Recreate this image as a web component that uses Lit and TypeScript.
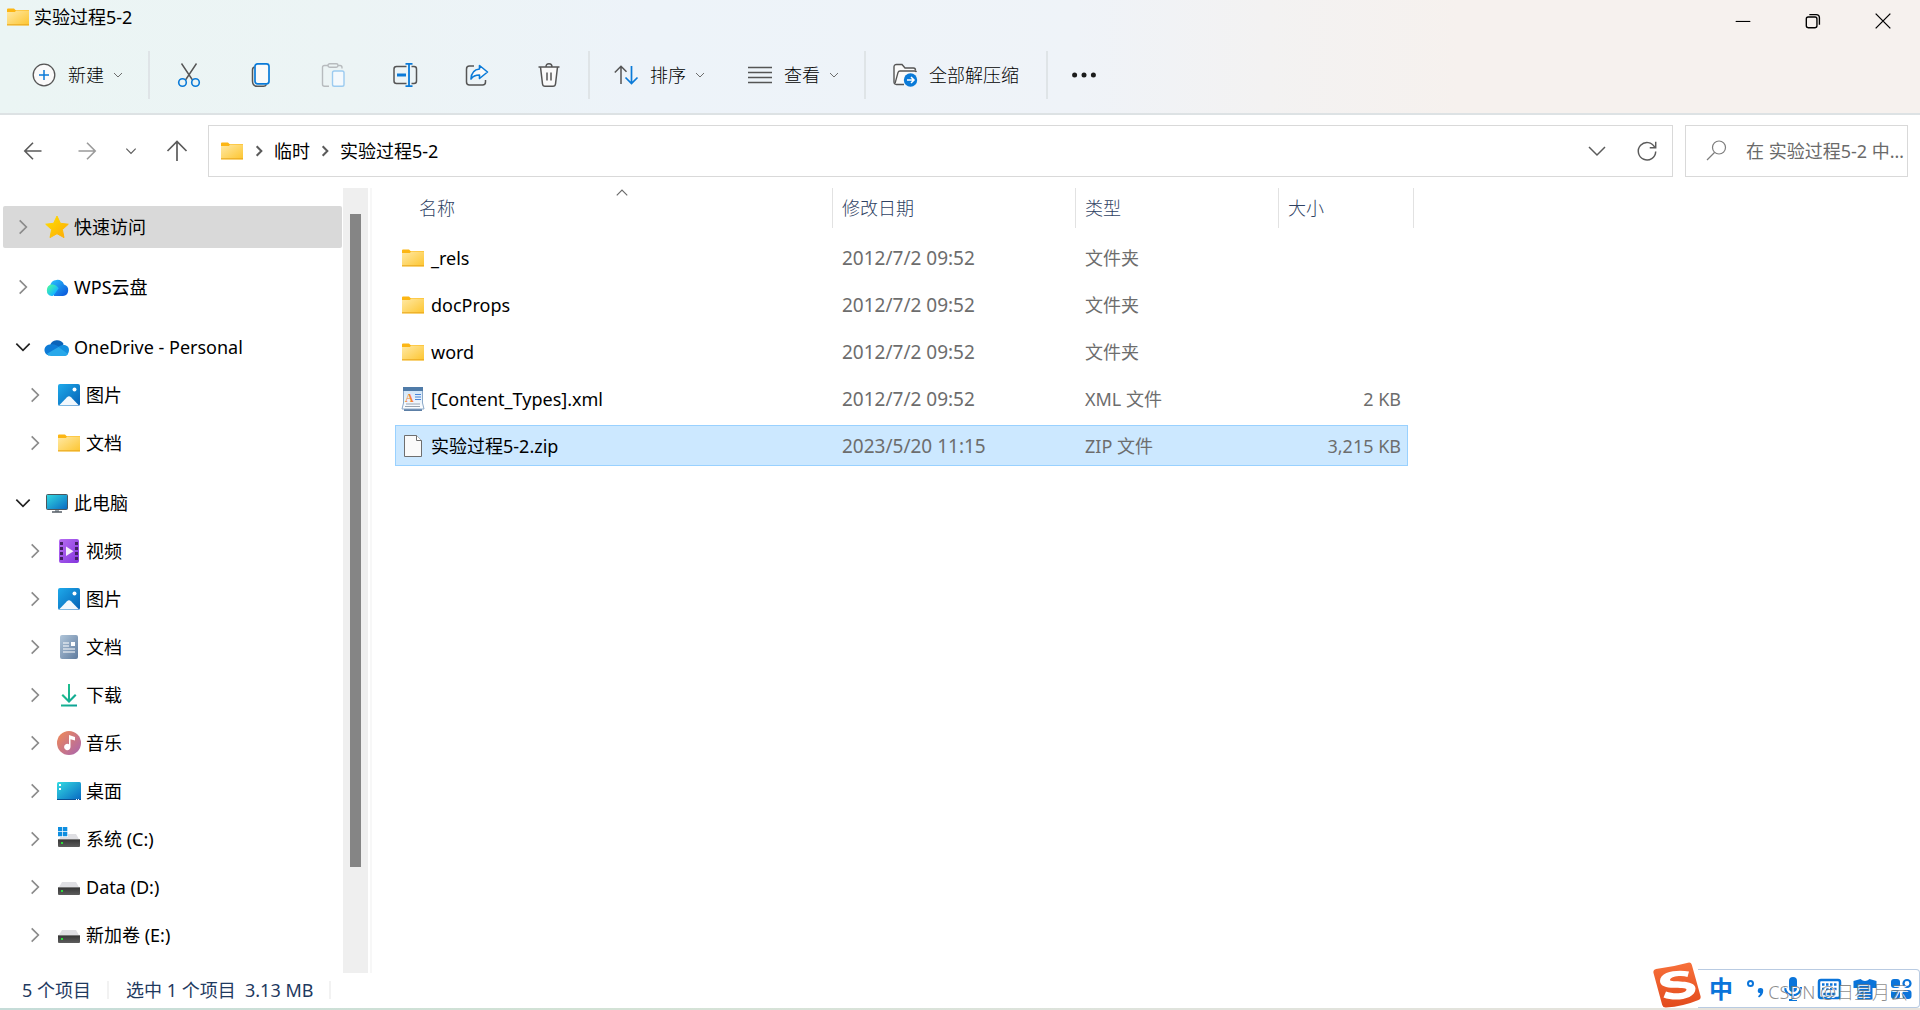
import { LitElement, html, css, svg, nothing } from "lit";
import { customElement, property } from "lit/decorators.js";
import { classMap } from "lit/directives/class-map.js";

const icon = (name: string, size = 24) => html`<svg class="icon" aria-hidden="true" width=${size} height=${size} viewBox="0 0 24 24">${glyphs[name]}</svg>`;

const drive = svg`
  <path d="M5 7h14l3.5 6h-21z" fill="#dfdfe3"/>
  <rect x="1" y="12" width="22" height="8" rx="1" fill="url(#dr)"/>
  <rect x="1" y="12" width="22" height="1" fill="#777"/>
  <rect x="4" y="15" width="2" height="2" fill="#2bdc3a"/>
  <defs><linearGradient id="dr" x2="0" y2="1"><stop stop-color="#333"/><stop offset="1" stop-color="#5d5d5d"/></linearGradient></defs>`;

const glyphs: Record<string, unknown> = {
  folder: svg`<defs><linearGradient id="f" x2="1" y2="1"><stop stop-color="#ffe9a6"/><stop offset="1" stop-color="#fdc52e"/></linearGradient></defs>
    <path d="M1 4.5q0-1 1-1h6l1.500 1.500H23v5H1z" fill="#fcb614"/><path d="M1 7h8l1-1.500h13V20q0 .5-.5.5h-21Q1 20.500 1 20z" fill="url(#f)"/><path d="M1 19.800h22" stroke="#e9a71f"/>`,
  star: svg`<defs><linearGradient id="s" x2="1" y2="1"><stop stop-color="#ffe000"/><stop offset="1" stop-color="#fda909"/></linearGradient></defs>
    <path d="M12 1l3.400 7.300 7.900.9-5.900 5.400 1.600 8L12 18.700 5 22.600l1.600-8L.7 9.200l7.900-.9z" fill="url(#s)" stroke="url(#s)" stroke-linejoin="round"/>`,
  wps: svg`<defs><linearGradient id="w1" x2="1" y2="1"><stop offset=".2" stop-color="#40efb0"/><stop offset=".7" stop-color="#16b8ff"/></linearGradient><linearGradient id="w2" x2="1" y2="1"><stop stop-color="#29c5ff"/><stop offset="1" stop-color="#0a50d8"/></linearGradient></defs>
    <path d="M5 11a7.300 7.300 0 0 1 14-1.500A5.900 5.900 0 0 1 18 21H9z" fill="url(#w2)"/><path d="M7 9.500c3 0 5 1.500 6.700 3.800L10 18.500C8.500 20.400 8 21 6.800 21A5.800 5.800 0 0 1 7 9.500z" fill="url(#w1)"/>`,
  onedrive: svg`<path d="M5 10.500A7.500 7.500 0 0 1 18.600 9l-4 6z" fill="#0b64b9"/><path d="M6 9.500c3-.7 6 1 8.500 2.700L4 20.500A5.500 5.500 0 0 1 6 9.500z" fill="#0e7bd6"/><path d="M13 12.500C15 9 24 8.500 24 15c0 3-2 6-5 6l-5-6z" fill="#1490df"/><path d="M2 18.800 13.500 12l9.500 7c-.8 1.200-2 2-4 2H6c-2 0-3.300-.8-4-2.200z" fill="#28a8ea"/>`,
  picture: svg`<defs><linearGradient id="p" x2="1" y2="1"><stop stop-color="#1eaaeb"/><stop offset="1" stop-color="#0560b4"/></linearGradient></defs>
    <rect x="1" y="1" width="22" height="22" rx="2" fill="url(#p)"/><path d="M2 22.500 10 14.200q2-2 4 0l8 8.300z" fill="#f2f8fd"/><circle cx="17.500" cy="6.500" r="2" fill="#fff"/>`,
  monitor: svg`<defs><linearGradient id="m" x2="1" y2="1"><stop stop-color="#33dbe2"/><stop offset="1" stop-color="#0867c2"/></linearGradient></defs>
    <path d="M10 18h4v3h-4z" fill="#9aa3aa"/><path d="M7 21h10" stroke="#555d65" stroke-width="1.500"/><rect x="1.500" y="3.500" width="21" height="15" rx="1" fill="url(#m)" stroke="#4b565e"/>`,
  video: svg`<defs><linearGradient id="v" x2="1" y2="1"><stop stop-color="#b66cf2"/><stop offset="1" stop-color="#8436dd"/></linearGradient></defs>
    <rect x="2" y="0" width="20" height="24" rx="2" fill="url(#v)"/><path d="M4.500 3v19M19.500 3v19" stroke="#432065" stroke-width="3" stroke-dasharray="3 2"/><path d="M9 7.500v9.500l7.500-4.700z" fill="#f5eefb"/>`,
  document: svg`<defs><linearGradient id="d" x2="1" y2="1"><stop stop-color="#b0c5d9"/><stop offset="1" stop-color="#5f7b9e"/></linearGradient></defs>
    <rect x="3" y="0" width="18" height="24" rx="2" fill="url(#d)"/><path d="M6 8h6M6 11h6M6 14h12M6 17h12" stroke="#fff" stroke-width="1.200"/><rect x="14" y="7" width="4" height="4" fill="#fff"/>`,
  download: svg`<defs><linearGradient id="dl" x2="1" y2="1"><stop stop-color="#26c98a"/><stop offset="1" stop-color="#0a9f97"/></linearGradient></defs>
    <path d="M11 1h2v15l5-5 1.500 1.500L12 20l-7.500-7.500L6 11l5 5zM4 21.500h16v2H4z" fill="url(#dl)"/>`,
  music: svg`<defs><linearGradient id="mu" x2="1" y2="1"><stop stop-color="#f28b54"/><stop offset="1" stop-color="#a864b0"/></linearGradient></defs>
    <circle cx="12" cy="12" r="12" fill="url(#mu)"/><path d="M12 4l6 2v3.500l-4.500-1.300V16a3.200 3.200 0 1 1-1.500-2.700z" fill="#fff"/>`,
  desktop: svg`<rect x="0" y="3" width="24" height="18" rx="1.500" fill="url(#m2)"/><defs><linearGradient id="m2" x2="1" y2="1"><stop stop-color="#33dbe2"/><stop offset="1" stop-color="#0867c2"/></linearGradient></defs><path d="M0 20.500h24" stroke="#0b4f93"/><path d="M2 5h2v2H2zM2 9h2v2H2z" fill="#fff"/><path d="M19 20.500h1M21 20.500h1" stroke="#fff"/>`,
  drive,
  system: svg`${drive}<path d="M1 0h10v10H1z" fill="#fff"/><path d="M1 0h4.300v4.300H1zM6 0h4.300v4.300H6zM1 5h4.300v4.300H1zM6 5h4.300v4.300H6z" fill="#0e8ee0"/>`,
  xml: svg`<defs><linearGradient id="x" x2="0" y2="1"><stop stop-color="#cbe2f8"/><stop offset="1" stop-color="#fff"/></linearGradient></defs>
    <path d="M3 21h18v3H3z" fill="#5c7fa6"/><path d="M2.500 1h19v15l1.500 6H1l1.500-6z" fill="url(#x)" stroke="#8ba8c8"/><path d="M2 0h20v4H2z" fill="#4f7ba8"/><text x="4" y="14.500" font-family="Liberation Serif, serif" font-size="12" font-weight="700" fill="#f58634">A</text><path d="M14 7.500h6M14 10h6M14 12.500h6" stroke="#4a86d8"/><path d="M5 17h14M4 19.500h15" stroke="#9aa5b2"/>`,
  file: svg`<path d="M3.500 1.500h12l5 5v16h-17z" fill="#fafafa" stroke="#6e6e6e"/><path d="M15.500 1.500v5h5" fill="#fff" stroke="#6e6e6e"/>`,
  add: svg`<circle cx="12" cy="12" r="10.800" fill="#fafafa" stroke="#555" stroke-width="1.300"/><path d="M12 7v10M7 12h10" stroke="#0a7ad8" stroke-width="1.500"/>`,
  cut: svg`<g fill="none" stroke-width="1.400"><path d="M4.500.5 15.500 17M19.500.5 8.500 17" stroke="#555"/><circle cx="5.500" cy="19.500" r="3.800" stroke="#0a7ad8" stroke-width="1.600"/><circle cx="18.500" cy="19.500" r="3.800" stroke="#0a7ad8" stroke-width="1.600"/></g>`,
  copy: svg`<g fill="none" stroke-width="1.500"><path d="M5.500 4Q3.500 4.500 3.500 7v11q0 5.300 5 5.300h6q2 0 3-1.800" stroke="#555"/><rect x="6" y=".8" width="14" height="20" rx="2.500" fill="#fafafa" stroke="#0a7ad8" stroke-width="1.700"/></g>`,
  paste: svg`<g fill="none" stroke-width="1.400"><path d="M7 2.500H3.500q-2 0-2 2v16.700q0 2 2 2H8M17 2.500h2q2 0 2 2v1" stroke="#b7bbbe"/><rect x="7" y=".8" width="10" height="3.500" rx="1.700" stroke="#b7bbbe"/><rect x="11.500" y="8" width="11.500" height="15.300" rx="1.800" fill="#f4f9fd" stroke="#9ccbf0"/></g>`,
  rename: svg`<g fill="none" stroke-width="1.500"><path d="M13.500 3.500H3.500Q1 3.500 1 6v12q0 2.500 2.500 2.500h10M18.500 3.500h2.500q2.500 0 2.500 2.500v12q0 2.500-2.500 2.500h-2.500" stroke="#555"/><path d="M12.500.8h7M12.500 23.200h7M16 .8v22.400" stroke="#0a7ad8" stroke-width="1.800"/><path d="M4 12h9" stroke="#0a7ad8" stroke-width="3"/></g>`,
  share: svg`<g fill="none" stroke-width="1.500" stroke-linejoin="round"><path d="M9 3H4.500Q1.500 3 1.500 6v13q0 3 3 3h13q3 0 3-3v-2" stroke="#555"/><path d="M14.500 2.500 22.500 9l-8 6.500V12c-4 0-6.500 1-8.500 4 .3-5.500 3-9.500 8.500-10z" fill="#fafafa" stroke="#0a7ad8" stroke-width="1.600"/></g>`,
  trash: svg`<g fill="none" stroke="#555" stroke-width="1.500"><path d="M3.500 4 5.500 21q.3 2.200 2.500 2.200h8q2.200 0 2.500-2.200l2-17" fill="#fafafa"/><path d="M1.500 4h21M9 4q0-3.200 3-3.200T15 4M10 9.500v8M14 9.500v8"/></g>`,
  sort: svg`<g fill="none" stroke-width="1.500"><path d="M7 21V3.500M.8 9.500 7 3.200l5.500 5.500" stroke="#555"/><path d="M17.500 3v17.500M11.500 14.500l6 6 6-6" stroke="#0a7ad8" stroke-width="1.700"/></g>`,
  view: svg`<path d="M0 4.500h24M0 9.500h24M0 14.500h24M0 19.500h24" stroke="#555" stroke-width="1.300"/>`,
  extract: svg`<path d="M11 21.500H3.500Q1 21.500 1 19V4q0-2.500 2.500-2.500H9L12 5h8.500q2 0 2 2.500" fill="#fafafa" stroke="#555" stroke-width="1.400"/><path d="M2 20.500 5 9.500Q5.500 8 7 8h14.500q1.500 0 2 1" fill="#fafafa" stroke="#555" stroke-width="1.300"/><circle cx="17.500" cy="17" r="6.700" fill="#0a7ad8"/><path d="M14 17h6.500M18 14l3 3-3 3" stroke="#fff" stroke-width="1.500" fill="none"/>`,
  more: svg`<g fill="#1b1b1b"><circle cx="2.600" cy="12" r="2.500"/><circle cx="12" cy="12" r="2.500"/><circle cx="21.400" cy="12" r="2.500"/></g>`,
  back: svg`<path d="M20.500 12H4M12 3.800 3.800 12l8.200 8.200" fill="none" stroke="#5b5b5b" stroke-width="1.600"/>`,
  forward: svg`<path d="M3.500 12H20M12 3.800l8.200 8.200-8.200 8.200" fill="none" stroke="#9b9b9b" stroke-width="1.600"/>`,
  up: svg`<path d="M12 22V3M2.500 12 12 2.500l9.500 9.500" fill="none" stroke="#5b5b5b" stroke-width="1.700"/>`,
  down: svg`<path d="M4 8l8 8 8-8" fill="none" stroke="currentColor" stroke-width="2"/>`,
  drop: svg`<path d="M4 8l8 8 8-8" fill="none" stroke="currentColor" stroke-width="1.500"/>`,
  right: svg`<path d="M8 4l8 8-8 8" fill="none" stroke="currentColor" stroke-width="2"/>`,
  crumb: svg`<path d="M8 4l8 8-8 8" fill="none" stroke="currentColor" stroke-width="3.500"/>`,
  sortUp: svg`<path d="M3 16l9-9 9 9" fill="none" stroke="currentColor" stroke-width="2"/>`,
  refresh: svg`<path d="M20.500 8A9.500 9.500 0 1 0 21.500 12.500M21.500 2v6.500H15" fill="none" stroke="#5b5b5b" stroke-width="1.600"/>`,
  search: svg`<circle cx="15" cy="8.500" r="6.500" fill="none" stroke="#7d7d7d" stroke-width="1.200"/><path d="M10.500 13.500 3 21" stroke="#7d7d7d" stroke-width="1.300"/>`,
  minimize: svg`<path d="M4 12.500h16" stroke="#000" stroke-width="1.200"/>`,
  restore: svg`<g fill="none" stroke="#000" stroke-width="1.500"><rect x="4.700" y="7.700" width="11.600" height="11.600" rx="2"/><path d="M8 5h7.500Q19 5 19 8.500V16"/></g>`,
  close: svg`<path d="M4 4l16 16M20 4 4 20" stroke="#000" stroke-width="1.400"/>`,
  punct: svg`<circle cx="5.500" cy="6.500" r="2.500" fill="none" stroke="#0a74da" stroke-width="2"/><path d="M15.500 11a2.700 2.700 0 0 1 2.700 3c0 3-1.700 5-4.200 6.500l-1-1.300c1.200-1 2-2 2.200-3a2.600 2.600 0 0 1 .3-5.200z" fill="#0a74da"/>`,
  mic: svg`<rect x="8" y="0" width="8" height="15" rx="4" fill="#0a74da"/><path d="M4 10c0 11 16 11 16 0M12 18v5M8 23h8" fill="none" stroke="#0a74da" stroke-width="2.200"/>`,
  keyboard: svg`<rect x="2" y="3" width="21" height="18" rx="2" fill="none" stroke="#0a74da" stroke-width="2.500"/><path d="M5 7.500h15M5 12h15" stroke="#0a74da" stroke-width="2.500" stroke-dasharray="2.500 1.500"/><path d="M6 17h13" stroke="#0a74da" stroke-width="2.500"/>`,
  shirt: svg`<path d="M7.500 2q4.500 4 9 0L23.500 4v7h-4V22.500h-15V11H.5V4z" fill="#0a74da"/>`,
  apps: svg`<rect x="2" y="2" width="9" height="9" rx="3" fill="#0a74da"/><circle cx="18" cy="6.500" r="3.500" fill="none" stroke="#0a74da" stroke-width="2.200"/><rect x="2" y="13" width="9" height="9" rx="3" fill="#0a74da"/><rect x="13.500" y="13" width="9" height="9" rx="3" fill="#0a74da"/>`,
};

const shared = css`
  :host { display: block; box-sizing: border-box; }
  * { box-sizing: border-box; }
  .icon { display: block; flex: none; overflow: visible; }
  button { font: inherit; color: inherit; background: none; border: 0; padding: 0; margin: 0; display: flex; align-items: center; }
  a { color: inherit; text-decoration: none; }
`;

@customElement("command-bar")
class CommandBar extends LitElement {
  static styles = [shared, css`
    :host { background: linear-gradient(90deg, #ebf5f4 0%, #ecf4f5 18%, #edf3f9 34%, #eff3f8 56%, #f3f2f2 66%, #f6f1ee 76%, #f6f1ee 100%); border-bottom: 2px solid #dde2e4; }
    .title { display: flex; align-items: flex-start; height: 42px; padding-right: 2px; }
    .name { display: flex; align-items: center; gap: 4px; margin: 0; padding: 4px 0 0 6px; font-size: 18px; font-weight: inherit; line-height: 26px; flex: 1; color: #000; }
    .window { display: flex; }
    .window button { width: 70px; height: 42px; justify-content: center; }
    .tools { display: flex; align-items: center; height: 71px; padding: 0 0 6px 8px; color: #000; font-weight: 300; }
    .tool { height: 48px; width: 72px; justify-content: center; }
    .wide { width: auto; gap: 12px; padding: 0 10px; }
    .group { display: flex; align-items: center; gap: 22px; height: 48px; padding: 0 14px; border-right: 2px solid #dfe4e7; }
    .edit { gap: 0; padding: 0 3px; }
    .single { padding: 0 17px; }
    .chev { color: #6d6d6d; margin-left: -4px; }
  `];
  tool(name: string, label: string, disabled = false) {
    return html`<button class="tool" aria-label=${label} ?disabled=${disabled}>${icon(name)}</button>`;
  }
  wide(name: string, label: string, menu = true) {
    return html`<button class="tool wide">${icon(name)}<span>${label}</span>${menu ? html`<span class="chev">${icon("down", 12)}</span>` : nothing}</button>`;
  }
  render() {
    return html`
      <div class="title">
        <h1 class="name">${icon("folder")}<span>实验过程5-2</span></h1>
        <div class="window">
          <button aria-label="最小化">${icon("minimize", 22)}</button>
          <button aria-label="还原">${icon("restore", 22)}</button>
          <button aria-label="关闭">${icon("close", 22)}</button>
        </div>
      </div>
      <div class="tools">
        <div class="group">${this.wide("add", "新建")}</div>
        <div class="group edit">
          ${this.tool("cut", "剪切")}${this.tool("copy", "复制")}${this.tool("paste", "粘贴", true)}
          ${this.tool("rename", "重命名")}${this.tool("share", "共享")}${this.tool("trash", "删除")}
        </div>
        <div class="group">${this.wide("sort", "排序")}${this.wide("view", "查看")}</div>
        <div class="group single">${this.wide("extract", "全部解压缩", false)}</div>
        ${this.tool("more", "更多")}
      </div>`;
  }
}

@customElement("address-bar")
class AddressBar extends LitElement {
  static styles = [shared, css`
    :host { display: flex; align-items: center; padding: 10px 12px 11px 6px; color: #000; }
    .nav { display: flex; align-items: center; }
    .nav button { width: 54px; height: 48px; justify-content: center; color: #5b5b5b; }
    .nav .recent { width: 34px; }
    .nav .up { width: 60px; padding-right: 2px; }
    .path { flex: 1; display: flex; align-items: center; height: 52px; min-width: 0; border: 1px solid #d9d9d9; padding-left: 11px; }
    .crumbs { display: flex; align-items: center; gap: 8px; flex: 1; }
    .crumbs .icon { color: #5b5b5b; }
    .path button { width: 50px; height: 40px; justify-content: center; color: #5b5b5b; }
    .search { display: flex; align-items: center; gap: 18px; width: 223px; height: 52px; margin-left: 12px; border: 1px solid #d9d9d9; padding-left: 18px; }
    input { flex: 1; min-width: 0; border: 0; outline: 0; padding: 0; background: none; font: inherit; color: #6a6a6a; text-overflow: ellipsis; }
    input::placeholder { color: #6a6a6a; opacity: 1; }
  `];
  render() {
    return html`
      <nav class="nav">
        <button aria-label="后退">${icon("back")}</button>
        <button aria-label="前进" disabled>${icon("forward")}</button>
        <button class="recent" aria-label="最近浏览的位置">${icon("down", 14)}</button>
        <button class="up" aria-label="向上">${icon("up")}</button>
      </nav>
      <div class="path">
        <div class="crumbs">${icon("folder")}${icon("crumb", 14)}<a href="#temp">临时</a>${icon("crumb", 14)}<a href="#current">实验过程5-2</a></div>
        <button aria-label="以前的位置">${icon("drop", 24)}</button>
        <button aria-label="刷新">${icon("refresh", 22)}</button>
      </div>
      <label class="search">${icon("search")}<input type="text" aria-label="搜索" placeholder="在 实验过程5-2 中搜索"></label>`;
  }
}

interface TreeNode { icon: string; label: string; child?: boolean; open?: boolean; selected?: boolean }

const tree: TreeNode[][] = [
  [{ icon: "star", label: "快速访问", selected: true }],
  [{ icon: "wps", label: "WPS云盘" }],
  [{ icon: "onedrive", label: "OneDrive - Personal", open: true }, { icon: "picture", label: "图片", child: true }, { icon: "folder", label: "文档", child: true }],
  [
    { icon: "monitor", label: "此电脑", open: true },
    { icon: "video", label: "视频", child: true },
    { icon: "picture", label: "图片", child: true },
    { icon: "document", label: "文档", child: true },
    { icon: "download", label: "下载", child: true },
    { icon: "music", label: "音乐", child: true },
    { icon: "desktop", label: "桌面", child: true },
    { icon: "system", label: "系统 (C:)", child: true },
    { icon: "drive", label: "Data (D:)", child: true },
    { icon: "drive", label: "新加卷 (E:)", child: true },
  ],
];

@customElement("folder-tree")
class FolderTree extends LitElement {
  static styles = [shared, css`
    :host { display: flex; width: 372px; flex: none; border-right: 2px solid #f7f7f7; padding-right: 2px; }
    .list { flex: 1; padding: 15px 1px 12px 3px; }
    .section { margin: 0 0 12px; padding: 0; list-style: none; }
    .section:last-child { margin: 0; }
    .item { padding: 3px 0; }
    .row { width: 100%; height: 42px; padding-left: 10px; border-radius: 2px; color: #8b8b8b; }
    .child { padding-left: 22px; }
    .open { color: #222; }
    .selected { background: #d9d9d9; }
    .pic { margin: 0 5px 0 12px; }
    .text { color: #000; white-space: nowrap; }
    .track { width: 25px; padding: 26px 7px 106px; background: #efefef; display: flex; }
    .thumb { flex: 1; background: #858585; }
  `];
  render() {
    return html`
      <nav class="list">
        ${tree.map(group => html`<ul class="section">${group.map(n => html`
          <li class="item"><button class=${classMap({ row: true, child: !!n.child, open: !!n.open, selected: !!n.selected })}>
            ${icon(n.open ? "down" : "right", 20)}<span class="pic">${icon(n.icon)}</span><span class="text">${n.label}</span>
          </button></li>`)}</ul>`)}
      </nav>
      <div class="track"><div class="thumb"></div></div>`;
  }
}

const files = [
  { icon: "folder", name: "_rels", date: "2012/7/2 09:52", type: "文件夹", size: "" },
  { icon: "folder", name: "docProps", date: "2012/7/2 09:52", type: "文件夹", size: "" },
  { icon: "folder", name: "word", date: "2012/7/2 09:52", type: "文件夹", size: "" },
  { icon: "xml", name: "[Content_Types].xml", date: "2012/7/2 09:52", type: "XML 文件", size: "2 KB" },
  { icon: "file", name: "实验过程5-2.zip", date: "2023/5/20 11:15", type: "ZIP 文件", size: "3,215 KB", selected: true },
];

@customElement("file-list")
class FileList extends LitElement {
  static styles = [shared, css`
    :host { flex: 1; padding-left: 23px; min-width: 0; }
    table { border-collapse: separate; border-spacing: 0; table-layout: fixed; width: 1019px; }
    .c-name { width: 438px; }
    .c-date { width: 243px; }
    .c-type { width: 203px; }
    .c-size { width: 129px; }
    .c-edge { width: 6px; }
    th { height: 46px; padding: 0; font-weight: 300; text-align: left; vertical-align: top; color: #2f4263; position: relative; }
    th button { width: 100%; height: 40px; padding: 0 0 0 9px; border-right: 1px solid #e2e2e2; }
    th:first-child button { padding-left: 24px; }
    .sorted { position: absolute; left: 220px; top: -2px; color: #6b6b6b; }
    td { height: 47px; padding: 0 0 0 9px; border: solid transparent; border-width: 3px 0; background-clip: padding-box; color: #6d6d6d; white-space: nowrap; }
    td:first-child { padding-left: 6px; color: #000; }
    .entry { display: flex; align-items: center; gap: 6px; }
    .date { font-size: 19px; }
    .size { text-align: right; padding: 0 7px 0 0; }
    .selected td { background-color: #cce8ff; box-shadow: inset 0 1px #99d1ff, inset 0 -1px #99d1ff; }
    .selected td:first-child { box-shadow: inset 0 1px #99d1ff, inset 0 -1px #99d1ff, inset 1px 0 #99d1ff; }
    .selected .size { box-shadow: inset 0 1px #99d1ff, inset 0 -1px #99d1ff, inset -1px 0 #99d1ff; }
  `];
  render() {
    return html`
      <table>
        <colgroup><col class="c-name"><col class="c-date"><col class="c-type"><col class="c-size"><col class="c-edge"></colgroup>
        <thead><tr>
          <th aria-sort="ascending"><button>名称</button><span class="sorted">${icon("sortUp", 14)}</span></th>
          <th><button>修改日期</button></th><th><button>类型</button></th><th colspan="2"><button>大小</button></th>
        </tr></thead>
        <tbody>${files.map(f => html`<tr class=${f.selected ? "selected" : ""}>
          <td><span class="entry">${icon(f.icon)}<span>${f.name}</span></span></td>
          <td class="date">${f.date}</td><td>${f.type}</td><td class="size">${f.size}</td>
        </tr>`)}</tbody>
      </table>`;
  }
}

@customElement("ime-bar")
class ImeBar extends LitElement {
  static styles = [shared, css`
    :host { display: flex; align-items: flex-end; position: absolute; right: 0; bottom: 2px; color: #0a74da; }
    .panel { display: flex; align-items: center; gap: 12px; height: 39px; padding: 0 6px 0 11px; border: 1px solid #b9cbe2; border-left: 0; border-radius: 0 4px 4px 0; background: #fff; }
    .mode { font-size: 24px; line-height: 24px; font-weight: 700; width: 24px; justify-content: center; }
    .mark { position: absolute; right: 12px; bottom: 3px; font-size: 18px; line-height: 26px; color: rgba(120, 120, 120, .85); text-shadow: 1px 1px #fff; white-space: nowrap; font-weight: 300; }
    .logo { margin-right: -3px; position: relative; display: block; }
  `];
  render() {
    return html`
      <svg class="logo" width="48" height="46" viewBox="0 0 48 46" role="img" aria-label="搜狗输入法">
        <defs><linearGradient id="sg" x2="0" y2="1"><stop stop-color="#f7703a"/><stop offset="1" stop-color="#e24a1c"/></linearGradient></defs>
        <path d="M3 7Q20 5 35 .8q3-.8 3.800 2L47.500 34q.8 3-2 4Q30 44.500 13 45.500q-3 .2-3.800-2.500L.5 11q-.8-3.500 2.500-4z" fill="url(#sg)"/>
        <path d="M36 9.500 34.500 15C28 13 17.500 14.500 17 18c-.3 3 25.500-1.500 25.500 8.500C42.500 37.500 22 40 10.500 35.500L13 29.500c8 3 20.500 2 20.500-2 0-3.500-26.500 2-26.500-8.500C7 9 25 7.500 36 9.500z" fill="#fff"/>
      </svg>
      <div class="panel">
        <button class="mode">中</button>
        <button aria-label="标点">${icon("punct")}</button>
        <button aria-label="语音">${icon("mic")}</button>
        <button aria-label="键盘">${icon("keyboard")}</button>
        <button aria-label="皮肤">${icon("shirt")}</button>
        <button aria-label="工具箱">${icon("apps")}</button>
      </div>
      <span class="mark">CSDN @日星月云</span>`;
  }
}

@customElement("app-root")
class AppRoot extends LitElement {
  @property({ type: Number }) count = files.length;
  static styles = [shared, css`
    :host { display: flex; flex-direction: column; position: relative; min-height: 100vh; background: #fff; font-family: "Noto Sans", "Noto Sans CJK SC", sans-serif; font-size: 18px; line-height: 26px; }
    .body { display: flex; flex: 1; }
    .status { display: flex; align-items: center; height: 35px; color: #1f3a5f; padding: 0 0 2px 22px; }
    .status span { padding-right: 16px; margin-right: 17px; border-right: 2px solid #f2f2f2; line-height: 18px; white-space: pre; }
    .strip { height: 2px; background: linear-gradient(90deg, #c5dcd8, #d2e2d5 30%, #dfe3dc 60%, #e8e3dc); }
  `];
  render() {
    return html`
      <command-bar></command-bar>
      <address-bar></address-bar>
      <div class="body"><folder-tree></folder-tree><file-list></file-list></div>
      <footer class="status"><span>${this.count} 个项目</span><span>选中 1 个项目  3.13 MB</span></footer>
      <div class="strip"></div>
      <ime-bar></ime-bar>`;
  }
}
